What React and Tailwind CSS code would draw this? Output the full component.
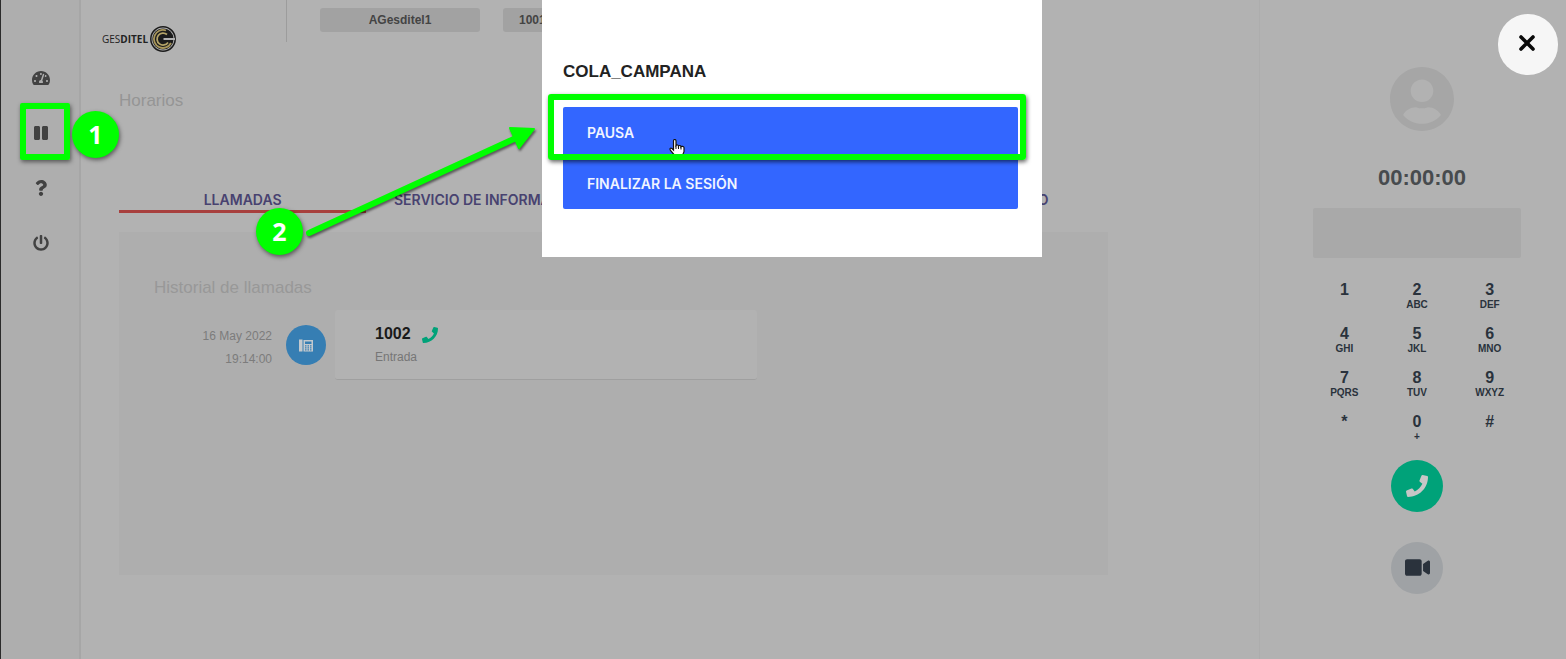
import React from "react";
import { FaPause, FaPhone, FaPowerOff, FaQuestion, FaTachometerAlt, FaUserCircle, FaVideo } from "react-icons/fa";

const nav = [
  { label: "Panel", Icon: FaTachometerAlt, size: 18 },
  { label: "Pausa", Icon: FaPause, size: 16 },
  { label: "Ayuda", Icon: FaQuestion, size: 16 },
  { label: "Salir", Icon: FaPowerOff, size: 16 },
];

const keys = [
  ["1", ""], ["2", "ABC"], ["3", "DEF"],
  ["4", "GHI"], ["5", "JKL"], ["6", "MNO"],
  ["7", "PQRS"], ["8", "TUV"], ["9", "WXYZ"],
  ["*", ""], ["0", "+"], ["#", ""],
];

function Sidebar() {
  return (
    <nav className="flex w-[81px] shrink-0 flex-col items-center gap-[15px] border-r-2 border-l border-r-[#a6a6a6] border-l-[#2b2b2b] bg-[#aeaeae] pt-[58px] pl-[2px]">
      {nav.map(({ label, Icon, size }) => (
        <button key={label} aria-label={label} className="flex size-10 items-center justify-center text-[#424242]">
          <Icon size={size} />
        </button>
      ))}
    </nav>
  );
}

function Logo() {
  return (
    <div className="flex items-center pt-[25px] font-['Open_Sans',sans-serif] text-[10px] leading-7 text-[#222]">
      <span>GES</span>
      <span className="font-bold">DITEL</span>
      <svg viewBox="0 0 28 28" className="ml-px size-7 shrink-0">
        <circle cx="14" cy="14" r="12.2" fill="#b2b2b2" stroke="#1c1c1c" strokeWidth="1.500" />
        <circle cx="14" cy="14" r="10.600" fill="#1c1c1c" />
        <path d="M17 5.500A9 9 0 1 0 22 18" fill="none" stroke="#a8965a" strokeWidth="1.800" />
        <path d="M18 9.500A6 6 0 1 0 19 17.500" fill="none" stroke="#b5a468" strokeWidth="1.800" />
        <path d="M26 14H14.500" stroke="#b2b2b2" strokeWidth="2" />
      </svg>
    </div>
  );
}

function Header() {
  return (
    <header className="flex h-[53px] pl-[21px] font-bold text-[#444]">
      <div className="w-[184px] shrink-0 font-normal"><Logo /></div>
      <div className="h-[42px] w-px shrink-0 bg-[#9c9c9c]" />
      <div className="ml-[33px] flex gap-[23px] pt-2 text-[12px] leading-6">
        <span className="h-6 w-40 rounded-[3px] bg-[#a2a2a2] text-center">AGesditel1</span>
        <span className="h-6 rounded-[3px] bg-[#a2a2a2] px-4">1001</span>
      </div>
    </header>
  );
}

function CallHistory() {
  return (
    <section className="mt-[19px] min-h-[343px] bg-[#aeaeae] px-[35px] pt-11">
      <h2 className="text-[17px] leading-6 text-[#989898]">Historial de llamadas</h2>
      <div className="mt-[10px] flex items-center">
        <div className="w-[118px] pt-[6px] text-right text-[12px] leading-[23px] text-[#7c7c7c]">
          <p>16 May 2022</p>
          <p>19:14:00</p>
        </div>
        <div className="ml-[14px] flex size-10 items-center justify-center rounded-full bg-[#367eb3]">
          <svg viewBox="0 0 14 13" className="h-[13px] w-[14px]" fill="#c3c9ce">
            <path d="M0 .5h3.500v12H0zM4.500 1h9.500v11.500H4.500zM6 2.500v2.500h6.500V2.500zM6 6.300v1.200h1.500V6.300zM8.500 6.300v1.200H10V6.300zM11 6.300v1.200h1.500V6.300zM6 8.300v1.200h1.500V8.300zM8.500 8.300v1.200H10V8.300zM11 8.300v1.200h1.500V8.300zM6 10.300v1.200h1.500v-1.200zM8.500 10.300v1.200H10v-1.200zM11 10.300v1.200h1.500v-1.200z" fillRule="evenodd" />
          </svg>
        </div>
        <article className="ml-[9px] h-[70px] w-[422px] rounded-[3px] border-b border-[#9f9f9f] bg-[#b2b2b2] px-10 pt-3">
          <div className="flex items-center gap-[11px]">
            <strong className="text-[16px] leading-6 text-[#1a1a1a]">1002</strong>
            <FaPhone size={16} className="mt-[2px] text-[#00a279]" />
          </div>
          <p className="text-[12px] leading-[23px] text-[#767676]">Entrada</p>
        </article>
      </div>
    </section>
  );
}

function PhonePanel() {
  return (
    <aside className="flex w-[307px] shrink-0 flex-col items-center border-l border-[#adadad] pl-2 text-[#2a323c]">
      <FaUserCircle size={66} className="mt-[66px] ml-[10px] text-[#a6a6a6]" />
      <p className="mt-[30px] ml-[10px] text-[22px] leading-8 font-bold text-[#474b4e]">00:00:00</p>
      <input aria-label="Número" className="mt-[14px] h-[50px] w-[208px] rounded-[2px] bg-[#a9a9a9] px-3 outline-none" />
      <div className="mt-[23px] grid w-[218px] grid-cols-3 font-bold">
        {keys.map(([digit, letters]) => (
          <button key={digit} className="flex h-11 flex-col items-center">
            <span className="text-[16px] leading-[18px]">{digit}</span>
            <span className="text-[10px] leading-3">{letters}</span>
          </button>
        ))}
      </div>
      <button aria-label="Llamar" className="mt-[3px] flex size-[52px] items-center justify-center rounded-full bg-[#00a279] text-[#c6c6c6]">
        <FaPhone size={22} />
      </button>
      <button aria-label="Videollamada" className="mt-[30px] flex size-[52px] items-center justify-center rounded-full bg-[#9fa2a5] pb-[2px]">
        <FaVideo size={25} />
      </button>
    </aside>
  );
}

function PauseDialog() {
  return (
    <div role="dialog" aria-label="COLA_CAMPANA" className="absolute inset-x-0 top-0 flex justify-center pl-[18px]">
      <div className="relative h-[257px] w-[500px] bg-white pt-[60px] pr-6 pl-[21px]">
        <h1 className="text-[17px] leading-6 font-bold text-[#222]">COLA_CAMPANA</h1>
        <div className="mt-[23px] flex flex-col overflow-hidden rounded-[2px] bg-[#3366ff] font-['Inter',sans-serif] text-[14px] font-semibold text-[#f0f4ff]">
          <button className="h-[50px] px-6 text-left">PAUSA</button>
          <button className="h-[52px] px-6 text-left">FINALIZAR LA SESIÓN</button>
        </div>
        <svg viewBox="0 0 16 18" className="absolute top-[139px] left-[127px] h-[18px] w-4">
          <path d="M5 17.500v-2L1.500 11.500C.3 9.500 1.500 8.500 3 9.500l1.500 1.500V2c0-2 2.500-2 2.500 0v4.500c.5-.8 2.500-.7 2.500.5.500-.8 2.500-.6 2.500.7.500-.7 3-.5 3 .9v4l-1.200 3v2z" fill="#fff" stroke="#111" strokeWidth="1.200" />
          <path d="M7 6.500V10M9.500 7v3M12 8v2.500" stroke="#111" strokeWidth="1" />
        </svg>
        <div className="absolute top-[94px] left-[6px] h-[66px] w-[478px] rounded-[3px] border-6 border-[#00ff00] shadow-[1px_2px_4px_rgba(0,0,0,0.6)]" />
      </div>
    </div>
  );
}

function Marker({ n, className }) {
  return (
    <span className={`absolute flex size-[47px] items-center justify-center rounded-full bg-[#00ff00] font-['Open_Sans',sans-serif] text-[25px] font-bold text-white shadow-[1px_2px_4px_rgba(0,0,0,0.5)] ${className}`}>
      {n}
    </span>
  );
}

export default function App() {
  return (
    <div className="relative flex min-h-screen overflow-hidden bg-[#b2b2b2] font-['Liberation_Sans',Arial,sans-serif]">
      <Sidebar />
      <main className="min-w-0 flex-1">
        <Header />
        <div className="pr-[151px] pl-[38px]">
          <p className="mt-9 text-[17px] leading-6 text-[#959595]">Horarios</p>
          <div className="mt-[73px] grid grid-cols-4 font-['Inter',sans-serif] text-[14px] font-semibold whitespace-nowrap text-[#484270]">
            <button className="h-[27px] border-b-3 border-[#a8403e] pt-[2px]">LLAMADAS</button>
            <button className="h-[27px] border-b-3 border-transparent pt-[2px]">SERVICIO DE INFORMACIÓN</button>
            <button className="col-start-4 h-[27px] border-b-3 border-transparent pt-[2px]">ENVÍO DE CORREO</button>
          </div>
          <CallHistory />
        </div>
      </main>
      <PhonePanel />
      <PauseDialog />
      <button aria-label="Cerrar" className="absolute top-[14px] right-2 flex h-[61px] w-[60px] items-center justify-center rounded-full bg-[#f6f6f6] pr-[2px] pb-[3px]">
        <svg viewBox="0 0 16 16" className="size-4" stroke="#0a0a0a" strokeWidth="3.600" strokeLinecap="round">
          <path d="M2 2l12 12M14 2L2 14" />
        </svg>
      </button>
      <div className="absolute top-[103px] left-5 h-[57px] w-[50px] rounded-[2px] border-6 border-[#00ff00] shadow-[1px_2px_4px_rgba(0,0,0,0.5)]" />
      <Marker n="1" className="top-[111px] left-[72px]" />
      <Marker n="2" className="top-[208px] left-64" />
      <svg viewBox="0 0 240 120" className="absolute top-[120px] left-[300px] h-[120px] w-[240px] drop-shadow-[1px_2px_1px_rgba(0,0,0,0.5)]">
        <path d="M9 113L216 18" stroke="#00ff00" strokeWidth="6" strokeLinecap="round" />
        <path d="M234 9L210 8L219 28Z" fill="#00ff00" stroke="#00ff00" strokeWidth="2" strokeLinejoin="round" />
      </svg>
    </div>
  );
}
